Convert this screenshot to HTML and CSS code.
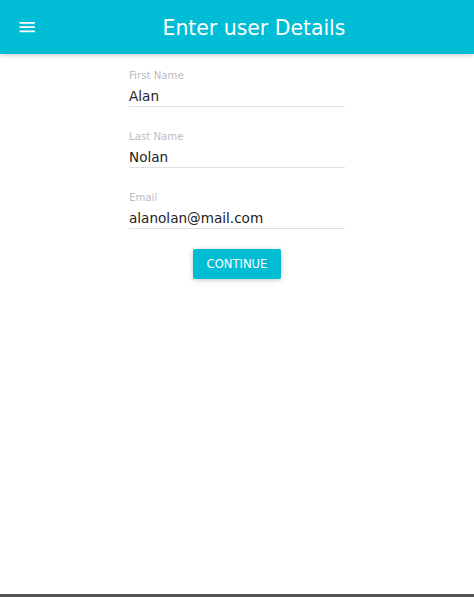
FILE: index.html
```html
<!DOCTYPE html>
<html lang="en">
<head>
<meta charset="utf-8">
<title>Enter user Details</title>
<link rel="stylesheet" href="styles.css">
</head>
<body>
<div class="page">
  <header class="appbar">
    <svg class="menu-icon" viewBox="0 0 24 24" aria-hidden="true"><path d="M3 18h18v-2H3v2zm0-5h18v-2H3v2zm0-7v2h18V6H3z" fill="#fff"/></svg>
    <h1 class="title">Enter user Details</h1>
  </header>
  <main class="form">
    <div class="field">
      <label class="label">First Name</label>
      <div class="value">Alan</div>
    </div>
    <div class="field">
      <label class="label">Last Name</label>
      <div class="value">Nolan</div>
    </div>
    <div class="field">
      <label class="label">Email</label>
      <div class="value">alanolan@mail.com</div>
    </div>
    <button class="btn" type="button">CONTINUE</button>
  </main>
  <div class="bottom-bar"></div>
</div>
</body>
</html>
```
FILE: styles.css
```css
* { box-sizing: border-box; }
html, body { margin: 0; padding: 0; background: #fff; }
body { font-family: "DejaVu Sans", Verdana, sans-serif; }
.page {
  display: flex;
  flex-direction: column;
  height: 100vh;
}
.appbar {
  display: flex;
  align-items: center;
  height: 54px;
  padding-left: 16.5px;
  background: #00bcd4;
  box-shadow: 0 1px 6px rgba(0,0,0,0.12), 0 1px 4px rgba(0,0,0,0.12);
  position: relative;
  z-index: 1;
  flex-shrink: 0;
}
.menu-icon {
  width: 20.4px;
  height: 20.4px;
  display: block;
  margin-top: -0.5px;
}
.title {
  flex: 1;
  margin: 0 0 0 -3px;
  text-align: center;
  color: #fff;
  font-weight: normal;
  font-size: 20.4px;
  line-height: 54px;
  padding-top: 1px;
}
.form {
  width: 216px;
  margin: 16px auto 0;
  display: flex;
  flex-direction: column;
}
.field {
  display: flex;
  flex-direction: column;
  border-bottom: 1px solid #e0e0e0;
  margin-bottom: 24px;
}
.field:nth-of-type(3) { margin-bottom: 20px; }
.label {
  font-size: 10.2px;
  line-height: 12px;
  color: #bdbdbd;
  margin-bottom: 4px;
}
.value {
  font-size: 13.6px;
  line-height: 20px;
  color: #212121;
}
.btn {
  align-self: center;
  width: 88px;
  height: 30px;
  border: none;
  border-radius: 2px;
  background: #00bcd4;
  color: #fff;
  font-family: "DejaVu Sans", Verdana, sans-serif;
  font-size: 11.6px;
  padding: 0;
  box-shadow: 0 1px 6px rgba(0,0,0,0.12), 0 1px 4px rgba(0,0,0,0.12);
}
.bottom-bar {
  margin-top: auto;
  height: 3px;
  background: #555;
  flex-shrink: 0;
}
```
